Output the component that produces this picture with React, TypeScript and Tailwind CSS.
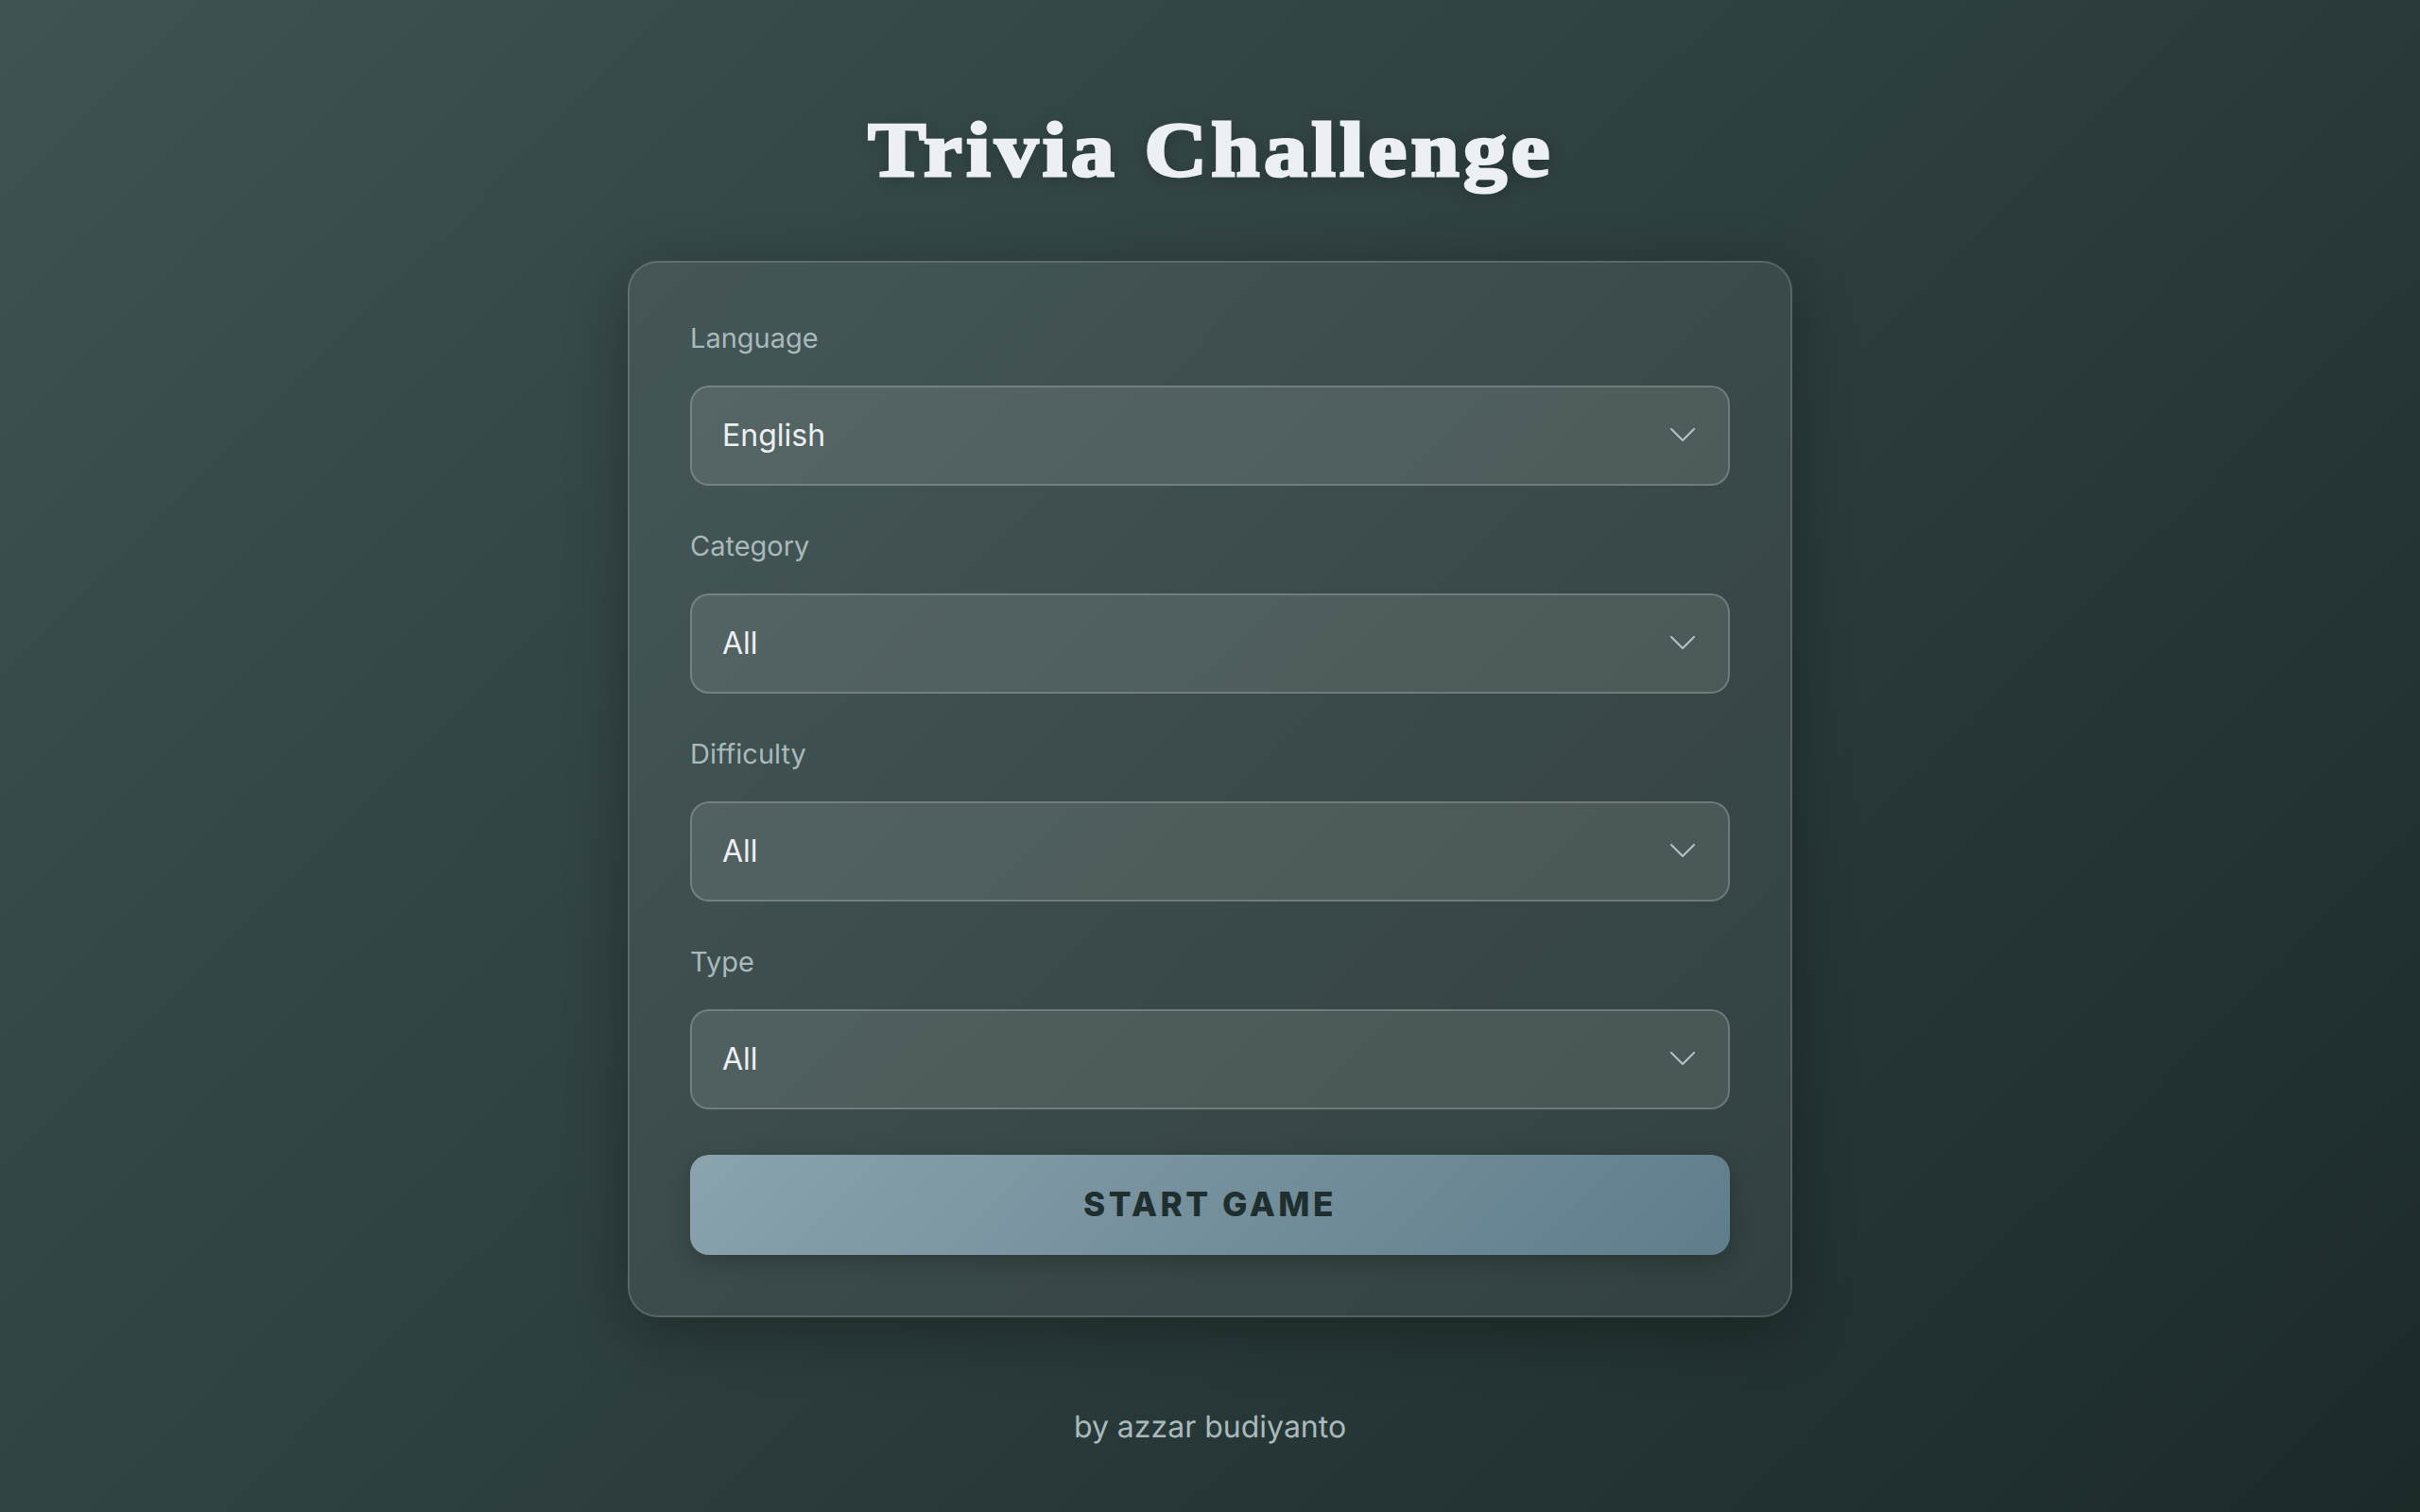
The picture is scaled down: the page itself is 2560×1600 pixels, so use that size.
import { ChevronDown } from 'lucide-react';

const fields = [
  { label: 'Language', options: ['English', 'Indonesian'] },
  { label: 'Category', options: ['All', 'General Knowledge', 'Science', 'History'] },
  { label: 'Difficulty', options: ['All', 'Easy', 'Medium', 'Hard'] },
  { label: 'Type', options: ['All', 'Multiple Choice', 'True / False'] },
];

export default function App() {
  return (
    <div className="min-h-screen flex flex-col items-center bg-[linear-gradient(135deg,#3e5352_0%,#1c2a2a_100%)] font-['Inter',sans-serif] [text-rendering:geometricPrecision]">
      <h1 className="mt-[111px] mb-[69px] ml-[2px] h-[96px] leading-[96px] text-[82px] font-bold font-['Liberation_Serif',serif] tracking-[4px] scale-x-[1.12] text-[#eceff4] [-webkit-text-stroke:3px_#eceff4] [text-shadow:0_4px_16px_rgba(0,0,0,0.3)]">
        Trivia Challenge
      </h1>

      <div className="w-[1232px] p-16 rounded-[32px] border-2 border-white/15 bg-white/7 shadow-[0_16px_64px_rgba(0,0,0,0.3)]">
        {fields.map((field) => (
          <div key={field.label} className="mb-12">
            <label className="block h-[30px] leading-[32px] mb-9 text-[29px] text-[#a9babd]">
              {field.label}
            </label>
            <div className="relative">
              <select className="appearance-none block w-full h-[106px] px-8 rounded-[20px] border-2 border-white/20 bg-white/10 text-[32px] text-[#eceff4] outline-none">
                {field.options.map((option) => (
                  <option key={option}>{option}</option>
                ))}
              </select>
              <ChevronDown
                size={48}
                strokeWidth={1}
                className="absolute right-[26px] top-[28px] text-[#b4c3c6] pointer-events-none"
              />
            </div>
          </div>
        ))}

        <button className="block w-full h-[106px] pb-[2px] rounded-[20px] bg-[linear-gradient(135deg,#8aa3ad_0%,#5f7d8c_100%)] text-[35.2px] font-extrabold tracking-[0.1em] text-[#1f2e2e] shadow-[0_8px_24px_rgba(0,0,0,0.2)]">
          START GAME
        </button>
      </div>

      <p className="mt-[96px] text-[32px] leading-[40px] text-[#a9babd]">by azzar budiyanto</p>
    </div>
  );
}
